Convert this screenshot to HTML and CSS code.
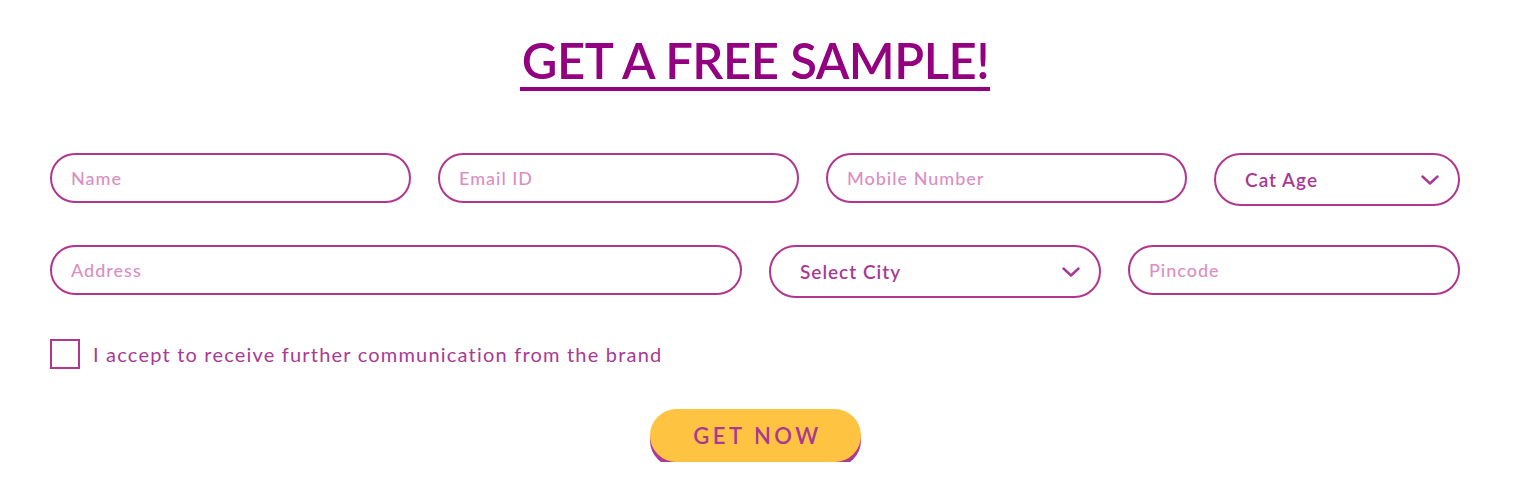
FILE: index.html
```html
<!DOCTYPE html>
<html lang="en">
<head>
    <meta charset="UTF-8">
    <meta name="viewport" content="width=device-width, initial-scale=1.0">
    <title>Get a Free Sample</title>
    <link rel="stylesheet" href="styles.css">
</head>
<body>
    <section class="sample">
        <h1 class="sample-title">GET A FREE SAMPLE!</h1>

        <form class="sample-form">
            <div class="form-row row-one">
                <input class="field" type="text" placeholder="Name">
                <input class="field" type="email" placeholder="Email ID">
                <input class="field" type="tel" placeholder="Mobile Number">
                <div class="select-box">
                    <span>Cat Age</span>
                    <svg class="chevron" viewBox="0 0 18 10" width="18" height="10"><path d="M1.5 1.5 L9 8.5 L16.5 1.5" fill="none" stroke="#a83a94" stroke-width="2.4" stroke-linecap="round" stroke-linejoin="round"/></svg>
                </div>
            </div>
            <div class="form-row row-two">
                <input class="field" type="text" placeholder="Address">
                <div class="select-box">
                    <span>Select City</span>
                    <svg class="chevron" viewBox="0 0 18 10" width="18" height="10"><path d="M1.5 1.5 L9 8.5 L16.5 1.5" fill="none" stroke="#a83a94" stroke-width="2.4" stroke-linecap="round" stroke-linejoin="round"/></svg>
                </div>
                <input class="field" type="text" placeholder="Pincode">
            </div>

            <label class="consent">
                <span class="box"></span>
                I accept to receive further communication from the brand
            </label>

            <div class="actions">
                <button type="button" class="get-now">GET NOW</button>
            </div>
        </form>
    </section>
</body>
</html>
```

FILE: styles.css
```css
body {
    margin: 0;
    padding: 0;
    background: #fff;
    font-family: "Lato", "Liberation Sans", sans-serif;
}

.sample {
    width: 1410px;
    padding: 33px 0 0 50px;
}

.sample-title {
    margin: 0 auto;
    width: fit-content;
    color: #930080;
    font-size: 49px;
    font-weight: 600;
    line-height: 54px;
    letter-spacing: -0.5px;
    padding: 0 1px 0 2px;
    border-bottom: 4px solid #930080;
}

.sample-form {
    margin-top: 62px;
}

.form-row {
    display: grid;
    gap: 27px;
    align-items: start;
}

.row-one {
    grid-template-columns: 361px 361px 361px 246px;
    margin-bottom: 39px;
}

.row-two {
    grid-template-columns: 692px 332px 332px;
    margin-bottom: 41px;
}

.field {
    box-sizing: border-box;
    height: 50px;
    width: 100%;
    border: 2px solid #b0368f;
    border-radius: 25px;
    padding: 0 19px;
    font-family: inherit;
    font-size: 18px;
    letter-spacing: 1px;
    color: #a83a94;
    outline: none;
}

.field::placeholder {
    color: #d98fc4;
    font-weight: 500;
}

.select-box {
    box-sizing: border-box;
    height: 53px;
    border: 2px solid #b0368f;
    border-radius: 27px;
    padding: 0 19px 0 29px;
    display: flex;
    align-items: center;
    justify-content: space-between;
    color: #a83a94;
    font-size: 19px;
    font-weight: 600;
    letter-spacing: 1px;
}

.consent {
    display: flex;
    align-items: center;
    gap: 13px;
    color: #a83a94;
    font-size: 20px;
    letter-spacing: 1.2px;
}

.box {
    flex-shrink: 0;
    width: 26px;
    height: 26px;
    border: 2px solid #b0368f;
}

.actions {
    display: flex;
    justify-content: center;
    margin-top: 40px;
}

.get-now {
    width: 211px;
    height: 53px;
    border: none;
    border-radius: 27px;
    background: #ffc342;
    box-shadow: 0 5px 0 #ae3a95;
    color: #a83a94;
    font-family: inherit;
    font-size: 22px;
    font-weight: 600;
    letter-spacing: 3.5px;
    padding: 0 0 0 4px;
    cursor: pointer;
    margin-left: 1px;
}
```
